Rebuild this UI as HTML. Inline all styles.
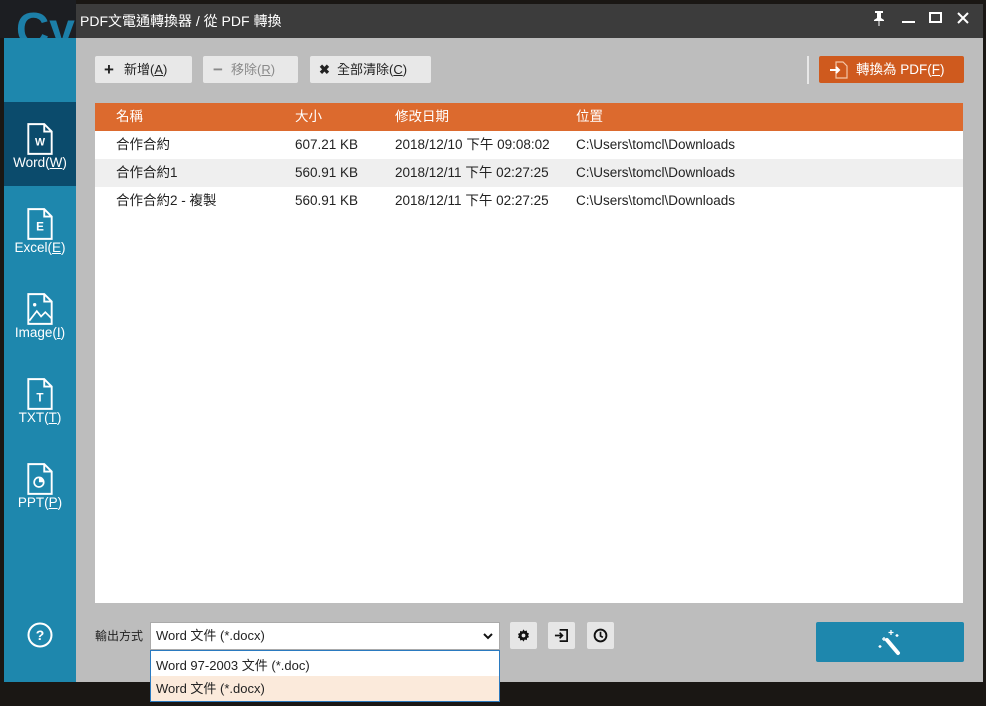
<!DOCTYPE html>
<html><head><meta charset="utf-8"><style>
*{margin:0;padding:0;box-sizing:border-box}
body{width:986px;height:706px;background:#1a1714;position:relative;overflow:hidden;font-family:"Liberation Sans","Noto Sans CJK TC",sans-serif;font-size:13px;color:#222}
.a{position:absolute}
.btn{position:absolute;background:#e8e8e8;border-radius:2px;height:27px;top:56px;line-height:27px;font-size:13px}
.tb{position:absolute;left:95px;width:868px;height:28px;line-height:28px;font-size:13.5px}
.tb span{position:absolute}
.side{position:absolute;left:4px;width:72px;height:84px;color:#fff;text-align:center;font-size:13.5px}
.side svg{position:absolute;left:22px;top:20px}
.side div{position:absolute;top:52px;width:100%}
.ib{position:absolute;top:622px;width:27px;height:27px;background:#e6e6e6;border-radius:2px}
.ib svg{position:absolute;left:6px;top:6px}
</style></head><body>
<div class="a" style="left:0;top:0;width:76px;height:38px;background:#1c1e22;overflow:hidden"><div class="a" style="left:16px;top:6px;font-size:46px;font-weight:bold;color:#1c7fa8;line-height:46px">Cv</div></div>
<div class="a" style="left:76px;top:4px;width:907px;height:34px;background:#3c3c3c"></div>
<div class="a" style="left:80px;top:11px;color:#fff;font-size:14px">PDF文電通轉換器 / 從 PDF 轉換</div>
<svg class="a" style="left:872px;top:10px" width="14" height="16" viewBox="0 0 14 16"><path d="M3 1h8v2H9v5l3 2v1H2v-1l3-2V3H3z M6.5 11h1v5h-1z" fill="#fff"/></svg>
<div class="a" style="left:902px;top:21px;width:13px;height:2px;background:#fff"></div>
<div class="a" style="left:929px;top:12px;width:13px;height:11px;border:2px solid #fff"></div>
<svg class="a" style="left:957px;top:12px" width="12" height="12"><path d="M1 1L11 11M11 1L1 11" stroke="#fff" stroke-width="2"/></svg>
<div class="a" style="left:4px;top:38px;width:72px;height:644px;background:#1e87ad"></div>
<div class="a" style="left:76px;top:38px;width:907px;height:644px;background:#bdbdbd"></div>

<div class="side" style="top:102px;background:#0b4b6c"><svg width="28" height="34" viewBox="0 0 26 32"><path d="M2 2h15l7 7v21H2z M17 2v7h7" fill="none" stroke="#fff" stroke-width="1.8"/><text x="13" y="22" fill="#fff" font-size="10" font-weight="bold" text-anchor="middle" font-family="Liberation Sans">W</text></svg><div style="top:53px">Word(<u>W</u>)</div></div>
<div class="side" style="top:187px"><svg width="28" height="34" viewBox="0 0 26 32"><path d="M2 2h15l7 7v21H2z M17 2v7h7" fill="none" stroke="#fff" stroke-width="1.8"/><text x="13" y="22" fill="#fff" font-size="11" font-weight="bold" text-anchor="middle" font-family="Liberation Sans">E</text></svg><div style="top:53px">Excel(<u>E</u>)</div></div>
<div class="side" style="top:272px"><svg width="28" height="34" viewBox="0 0 26 32"><path d="M2 2h15l7 7v21H2z M17 2v7h7" fill="none" stroke="#fff" stroke-width="1.8"/><circle cx="8" cy="12" r="1.6" fill="#fff"/><path d="M3 27l7-9 4 5 4-4 6 6" fill="none" stroke="#fff" stroke-width="1.6"/></svg><div style="top:53px">Image(<u>I</u>)</div></div>
<div class="side" style="top:357px"><svg width="28" height="34" viewBox="0 0 26 32"><path d="M2 2h15l7 7v21H2z M17 2v7h7" fill="none" stroke="#fff" stroke-width="1.8"/><text x="13" y="23" fill="#fff" font-size="11" font-weight="bold" text-anchor="middle" font-family="Liberation Sans">T</text></svg><div style="top:53px">TXT(<u>T</u>)</div></div>
<div class="side" style="top:442px"><svg width="28" height="34" viewBox="0 0 26 32"><path d="M2 2h15l7 7v21H2z M17 2v7h7" fill="none" stroke="#fff" stroke-width="1.8"/><circle cx="12" cy="19" r="4.5" fill="none" stroke="#fff" stroke-width="1.6"/><path d="M12 19V14.5A4.5 4.5 0 0 1 16.5 19z" fill="#fff"/></svg><div style="top:53px">PPT(<u>P</u>)</div></div>
<svg class="a" style="left:27px;top:622px" width="26" height="26"><circle cx="13" cy="13" r="11.5" fill="none" stroke="#fff" stroke-width="2"/><text x="13" y="18" fill="#fff" font-size="14" font-weight="bold" text-anchor="middle" font-family="Liberation Sans">?</text></svg>

<div class="btn" style="left:95px;width:97px"><b class="a" style="left:9px;top:0;font-size:17px">+</b><span class="a" style="left:29px">新增(<u>A</u>)</span></div>
<div class="btn" style="left:203px;width:95px;color:#8a8a8a"><b class="a" style="left:10px;top:0;font-size:17px">−</b><span class="a" style="left:28px">移除(<u>R</u>)</span></div>
<div class="btn" style="left:310px;width:121px"><b class="a" style="left:9px;top:0;font-size:13px">✖</b><span class="a" style="left:27px">全部清除(<u>C</u>)</span></div>
<div class="a" style="left:807px;top:56px;width:2px;height:28px;background:#e8e8e8"></div>
<div class="btn" style="left:819px;width:145px;background:#cf5a1e;color:#fff"><svg class="a" style="left:10px;top:5px" width="20" height="18" viewBox="0 0 20 18"><path d="M7 1h7l4 4v12H7z" fill="none" stroke="#f4c6a8" stroke-width="1.2"/><path d="M1 9h9M7 6l3 3-3 3" fill="none" stroke="#fff" stroke-width="2"/></svg><span class="a" style="left:37px;font-size:13.5px">轉換為 PDF(<u>F</u>)</span></div>

<div class="a" style="left:95px;top:103px;width:868px;height:500px;background:#fff"></div>
<div class="tb" style="top:103px;background:#dc6a2e;color:#fff"><span style="left:21px">名稱</span><span style="left:200px">大小</span><span style="left:300px">修改日期</span><span style="left:481px">位置</span></div>
<div class="tb" style="top:131px"><span style="left:21px">合作合約</span><span style="left:200px">607.21 KB</span><span style="left:300px">2018/12/10 下午 09:08:02</span><span style="left:481px">C:\Users\tomcl\Downloads</span></div>
<div class="tb" style="top:159px;background:#efefef"><span style="left:21px">合作合約1</span><span style="left:200px">560.91 KB</span><span style="left:300px">2018/12/11 下午 02:27:25</span><span style="left:481px">C:\Users\tomcl\Downloads</span></div>
<div class="tb" style="top:187px"><span style="left:21px">合作合約2 - 複製</span><span style="left:200px">560.91 KB</span><span style="left:300px">2018/12/11 下午 02:27:25</span><span style="left:481px">C:\Users\tomcl\Downloads</span></div>

<div class="a" style="left:95px;top:627px;font-size:12px">輸出方式</div>
<div class="a" style="left:150px;top:622px;width:350px;height:28px;background:#fff;border:1px solid #aaa;line-height:26px;padding-left:5px">Word 文件 (*.docx)<svg class="a" style="right:6px;top:10px" width="10" height="7"><path d="M1 1l4 4 4-4" fill="none" stroke="#111" stroke-width="2"/></svg></div>
<div class="a" style="left:150px;top:650px;width:350px;height:52px;background:#fff;border:1px solid #2a7ac0"></div>
<div class="a" style="left:156px;top:655px">Word 97-2003 文件 (*.doc)</div>
<div class="a" style="left:151px;top:676px;width:348px;height:25px;background:#fbeadb;padding-left:5px;line-height:25px">Word 文件 (*.docx)</div>

<div class="ib" style="left:510px"><svg width="15" height="15" viewBox="0 0 16 16"><path d="M8 1.5l1.3 1.8 2.2-.6.3 2.2 2.1.9-1 2 1 2-2.1.9-.3 2.2-2.2-.6L8 14.5l-1.3-1.8-2.2.6-.3-2.2-2.1-.9 1-2-1-2 2.1-.9.3-2.2 2.2.6z" fill="#111"/><circle cx="8" cy="8" r="2" fill="#e6e6e6"/></svg></div>
<div class="ib" style="left:548px"><svg width="15" height="15" viewBox="0 0 16 16"><path d="M6 2h8v12H6" fill="none" stroke="#111" stroke-width="1.8"/><path d="M1 8h8M6 5l3 3-3 3" fill="none" stroke="#111" stroke-width="1.8"/></svg></div>
<div class="ib" style="left:587px"><svg width="15" height="15" viewBox="0 0 16 16"><circle cx="8" cy="8" r="6.3" fill="none" stroke="#111" stroke-width="2"/><path d="M8 4v4.5l2.5 1.5" fill="none" stroke="#111" stroke-width="1.8"/></svg></div>

<div class="a" style="left:816px;top:622px;width:148px;height:40px;background:#1e87ad;border-radius:2px"><svg class="a" style="left:60px;top:6px" width="28" height="28" viewBox="0 0 28 28"><path d="M11 12l11 13" stroke="#fff" stroke-width="4" stroke-linecap="round"/><path d="M15 2v5M12.5 4.5h5M8 9v4M6 11h4M21 6v3M19.5 7.5h3M4 17v3M2.5 18.5h3" stroke="#fff" stroke-width="1.3"/></svg></div>
</body></html>
